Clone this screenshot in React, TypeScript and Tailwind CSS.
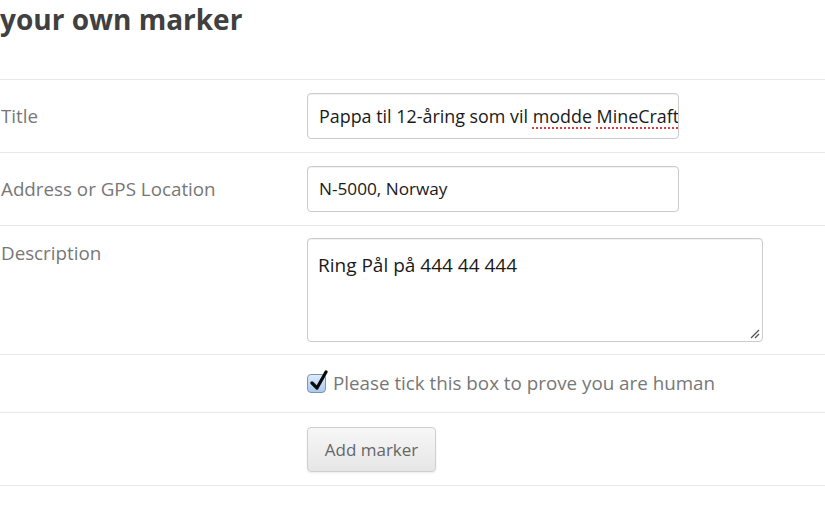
import React from "react";

const font = { fontFamily: '"Open Sans", "Noto Sans", Arial, sans-serif' };

function Row({ label, children, className = "", alignTop = false }: { label?: string; children: React.ReactNode; className?: string; alignTop?: boolean }) {
  return (
    <div className={`grid grid-cols-[306px_1fr] border-t border-[#e8e8e8] pl-px ${alignTop ? "items-start" : "items-center"} ${className}`}>
      <div className="text-[18.8px] leading-[30px] text-[#777]">{label}</div>
      <div>{children}</div>
    </div>
  );
}

const spell = "underline decoration-dotted decoration-[#e23a3a] decoration-2 underline-offset-[4px]";

export default function App() {
  return (
    <div className="w-[825px] h-[510px] overflow-hidden bg-white" style={font}>
      <h1 className="text-[28px] font-bold leading-[38px] text-[#404040] h-[79px]">your own marker</h1>
      <Row label="Title" className="py-[13px]">
        <div className="w-[372px] h-[46px] rounded-[4px] border border-[#cccccc] shadow-[inset_0_1px_1px_rgba(0,0,0,0.06)] pl-[11px] leading-[44px] overflow-hidden whitespace-nowrap text-[17.9px] text-[#1a1a1a]">
          Pappa til 12-åring som vil <span className={spell}>modde</span> <span className={spell}>MineCraft</span>
        </div>
      </Row>
      <Row label="Address or GPS Location" className="py-[13px]">
        <div className="w-[372px] h-[46px] rounded-[4px] border border-[#cccccc] shadow-[inset_0_1px_1px_rgba(0,0,0,0.06)] pl-[11px] leading-[44px] overflow-hidden whitespace-nowrap text-[17.2px] text-[#1a1a1a]">
          N-5000, Norway
        </div>
      </Row>
      <Row label="Description" alignTop className="pt-[12px] pb-[12px]">
        <div className="relative w-[456px] h-[104px] rounded-[4px] border border-[#cccccc] shadow-[inset_0_1px_1px_rgba(0,0,0,0.06)] px-[10px] pt-[13px] text-[19px] leading-[26px] text-[#1a1a1a]">
          Ring Pål på 444 44 444
          <svg className="absolute right-[2px] bottom-[2px]" width="11" height="11" viewBox="0 0 11 11">
            <line x1="10" y1="2" x2="2" y2="10" stroke="#555" strokeWidth="1.2" />
            <line x1="10" y1="6" x2="6" y2="10" stroke="#555" strokeWidth="1.2" />
          </svg>
        </div>
      </Row>
      <Row className="h-[58px]">
        <div className="flex items-center gap-[7px]">
          <span className="relative inline-block w-[19px] h-[19px] rounded-[4px] border border-[#7d94b0] bg-gradient-to-b from-[#dcebfb] to-[#a9c9ef]">
            <svg className="absolute left-[1px] top-[-5px]" width="20" height="22" viewBox="0 0 20 22">
              <path d="M3 13 L8 18 L17 2" fill="none" stroke="#0a0a0a" strokeWidth="3.2" strokeLinecap="round" strokeLinejoin="round" />
            </svg>
          </span>
          <span className="text-[18.8px] text-[#777]">Please tick this box to prove you are human</span>
        </div>
      </Row>
      <Row className="pt-[14px] pb-[13px] border-b">
        <button className="w-[129px] h-[45px] rounded-[4px] border border-[#cfcfcf] bg-gradient-to-b from-[#f7f7f7] to-[#e6e6e6] shadow-[0_1px_2px_rgba(0,0,0,0.08)] text-[17px] text-[#666]">
          Add marker
        </button>
      </Row>
    </div>
  );
}
